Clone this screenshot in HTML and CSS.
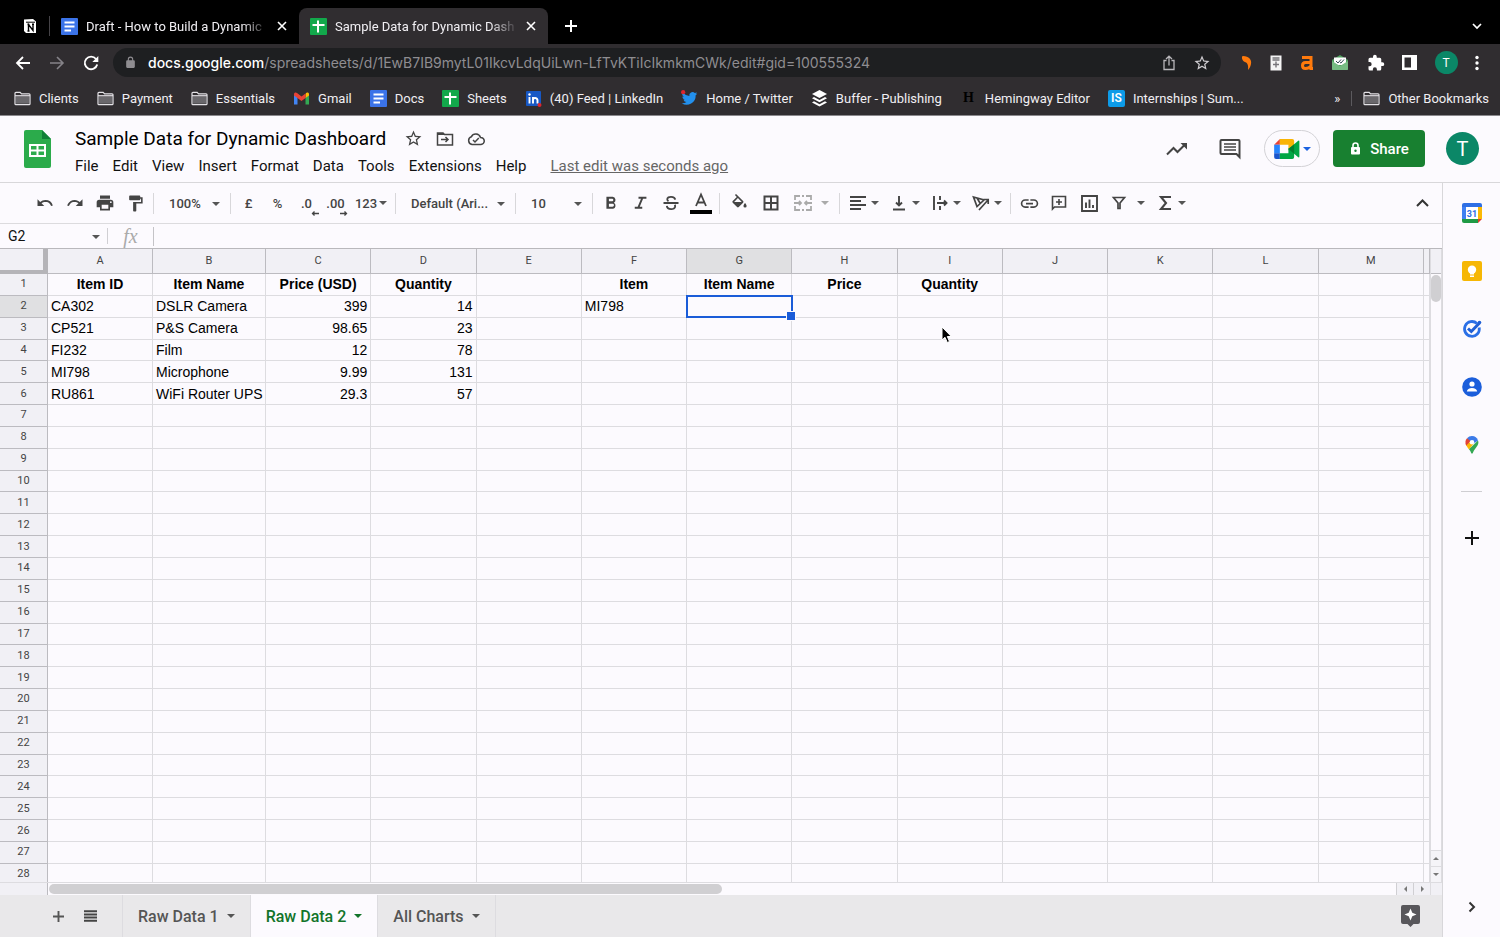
FILE: index.html
```html
<!DOCTYPE html>
<html lang="en">
<head>
    <meta charset="utf-8">
    <meta name="viewport" content="width=device-width, initial-scale=1">
    <title>Sample Data for Dynamic Dashboard</title>
    <link rel="stylesheet" href="styles.css">
</head>
<body>
    <!-- shared icons -->
    <svg class="sprite" aria-hidden="true">
        <symbol id="folder" viewBox="0 0 18 16"><path d="M1 3V13.500a1 1 0 0 0 1 1H16a1 1 0 0 0 1-1V4a1 1 0 0 0-1-1H8L6.500 1.500H2A1 1 0 0 0 1 2.500Z" fill="none" stroke="#e4e2e6" stroke-width="1.300"/><path d="M2 5.500H16V13.500H2Z" fill="#6a686c"/><path d="M1 5H17" stroke="#e4e2e6" stroke-width="1.200"/></symbol>
        <symbol id="docs" viewBox="0 0 17 17"><rect width="17" height="17" rx="1" fill="#3b73e8"/><path d="M3.500 4.500H13.500M3.500 8.500H13.500M3.500 12.500H10" stroke="#fff" stroke-width="1.800"/></symbol>
        <symbol id="sheets" viewBox="0 0 17 17"><rect width="17" height="17" rx="1" fill="#12a84b"/><path d="M2.500 7H14.500M8 2.500V14.500" stroke="#fff" stroke-width="2"/></symbol>
        <symbol id="close" viewBox="0 0 10 10"><path d="M1 1L9 9M9 1L1 9" stroke="#fff" stroke-width="1.600"/></symbol>
        <symbol id="star" viewBox="0 0 24 24"><path d="M22 9.240l-7.190-.62L12 2 9.190 8.630 2 9.240l5.460 4.730L5.820 21 12 17.270 18.180 21l-1.630-7.030L22 9.240zM12 15.400l-3.760 2.270 1-4.280-3.320-2.880 4.380-.38L12 6.100l1.710 4.040 4.380.38-3.320 2.880 1 4.280L12 15.400z"/></symbol>
        <symbol id="lock" viewBox="0 0 24 24"><path d="M18 8h-1V6A5 5 0 0 0 7 6v2H6a2 2 0 0 0-2 2v10a2 2 0 0 0 2 2h12a2 2 0 0 0 2-2V10a2 2 0 0 0-2-2zM9 6a3 3 0 0 1 6 0v2H9z"/></symbol>
    </svg>

    <header class="browser">
        <div class="tab-strip">
            <button class="pinned" aria-label="Notion">
                <svg width="14" height="16" viewBox="0 0 14 16"><path d="M1 1.500L10 1L13 3.500V15H3L1 13Z" fill="#fff"/><path d="M3 4.200H12" stroke="#000"/><path d="M5.500 13V6.500L10 12.500V6M4.500 6.500H6.500M9 6.200H11M4.500 13H6.500" fill="none" stroke="#000" stroke-width="1.400"/></svg>
            </button>
            <div class="tab">
                <svg width="17" height="17"><use href="#docs"/></svg>
                <span class="tab-title">Draft - How to Build a Dynamic</span>
                <button aria-label="Close tab"><svg width="10" height="10"><use href="#close"/></svg></button>
            </div>
            <div class="tab current">
                <svg width="17" height="17"><use href="#sheets"/></svg>
                <span class="tab-title">Sample Data for Dynamic Dash</span>
                <button aria-label="Close tab"><svg width="10" height="10"><use href="#close"/></svg></button>
            </div>
            <button class="new-tab" aria-label="New tab"><svg width="14" height="14" viewBox="0 0 14 14"><path d="M7 1V13M1 7H13" stroke="#fff" stroke-width="2"/></svg></button>
            <button class="tab-search" aria-label="Search tabs"><svg width="10" height="8" viewBox="0 0 10 8"><path d="M1 2L5 6L9 2" fill="none" stroke="#fff" stroke-width="1.700"/></svg></button>
        </div>

        <div class="nav-bar">
            <button aria-label="Back"><svg width="16" height="16" viewBox="0 0 16 16" fill="none" stroke="#fff" stroke-width="1.800"><path d="M15 8H2M8 2L2 8L8 14"/></svg></button>
            <button aria-label="Forward"><svg width="16" height="16" viewBox="0 0 16 16" fill="none" stroke="#858388" stroke-width="1.600"><path d="M1 8H14M8 2L14 8L8 14"/></svg></button>
            <button aria-label="Reload"><svg width="16" height="16" viewBox="0 0 16 16"><path d="M13 4A6.300 6.300 0 1 0 14.200 9.500" fill="none" stroke="#fff" stroke-width="1.900"/><path d="M15.300 1V7H9.300Z" fill="#fff"/></svg></button>
            <div class="omnibox">
                <svg width="13" height="13" fill="#8f8d91"><use href="#lock"/></svg>
                <p class="url"><b>docs.google.com</b>/spreadsheets/d/1EwB7IB9mytL01IkcvLdqUiLwn-LfTvKTiIcIkmkmCWk/edit#gid=100555324</p>
                <button aria-label="Share page"><svg width="14" height="16" viewBox="0 0 14 16" fill="none" stroke="#b9b7bb" stroke-width="1.300"><path d="M4.500 5.500H2V14.500H12V5.500H9.500M7 10.500V1.500M4 4L7 1.200L10 4"/></svg></button>
                <button aria-label="Bookmark"><svg width="18" height="18" fill="#d0ced2"><use href="#star"/></svg></button>
            </div>
            <div class="extensions">
                <button aria-label="Semrush"><svg width="12" height="16" viewBox="0 0 12 16"><path d="M2 1C8 1 11 5 10 9C9.500 12 8 14 7 15C7.500 11 7 8 4 7C1 6 0 1 2 1Z" fill="#ff7a0c"/></svg></button>
                <button aria-label="Notes"><svg width="12" height="16" viewBox="0 0 12 16"><path d="M.5.500H11.500V15.500H.5Z" fill="#f4f4f4"/><path d="M2.500 3H9.500M2.500 5H9.500M6 6.500V12.500M3 9.500H9" stroke="#77757a" stroke-width="1.400"/></svg></button>
                <button aria-label="Ahrefs"><svg width="14" height="16" viewBox="0 0 14 16"><path d="M2 2.500H11V13.500H13M11 7.500H5.500Q2.500 7.500 2.500 10.500T5.500 13.500Q9 13.500 11 11" fill="none" stroke="#ff7a0c" stroke-width="3"/></svg></button>
                <button aria-label="Mail tracker"><svg width="18" height="16" viewBox="0 0 18 16"><path d="M1 5L9 0L17 5V14Q17 15 16 15H2Q1 15 1 14Z" fill="#4f9f5f"/><path d="M3 2.500H15V10H3Z" fill="#fff"/><path d="M1 6L9 11L17 6V14Q17 15 16 15H2Q1 15 1 14Z" fill="#76bc83"/><path d="M5 6L7 8L10 4.500M9 7.500L10 8L13 4.500" fill="none" stroke="#354b58"/></svg></button>
                <button aria-label="Extensions"><svg width="18" height="18" viewBox="0 0 24 24" fill="#fff"><path d="M20.500 11H19V7a2 2 0 0 0-2-2h-4V3.500a2.500 2.500 0 0 0-5 0V5H4a2 2 0 0 0-2 2v3.800h1.500a2.700 2.700 0 0 1 0 5.400H2V20a2 2 0 0 0 2 2h3.800v-1.500a2.700 2.700 0 0 1 5.400 0V22H17a2 2 0 0 0 2-2v-4h1.500a2.500 2.500 0 0 0 0-5z"/></svg></button>
                <button aria-label="Side panel"><svg width="15" height="15" viewBox="0 0 15 15"><path d="M0 0H15V15H0Z" fill="#fff"/><path d="M2.500 2.500H9V12.500H2.500Z" fill="#302d30"/></svg></button>
                <button class="avatar small" aria-label="Profile">T</button>
                <button aria-label="Menu"><svg width="4" height="16" viewBox="0 0 4 16" fill="#fff"><circle cx="2" cy="2.500" r="1.700"/><circle cx="2" cy="8" r="1.700"/><circle cx="2" cy="13.500" r="1.700"/></svg></button>
            </div>
        </div>

        <nav class="bookmarks">
            <a href="#"><svg width="17" height="15"><use href="#folder"/></svg>Clients</a>
            <a href="#"><svg width="17" height="15"><use href="#folder"/></svg>Payment</a>
            <a href="#"><svg width="17" height="15"><use href="#folder"/></svg>Essentials</a>
            <a href="#"><svg width="17" height="17" viewBox="0 0 17 17"><path d="M1 4V14.500H4.500V7.500Z" fill="#4285f4"/><path d="M16 4V14.500H12.500V7.500Z" fill="#34a853"/><path d="M12.500 4.500V8L16 5.500V4C16 2.300 14 2 13 3Z" fill="#fbbc04"/><path d="M1 5.500V4C1 2.300 3 2 4 3L8.500 6.500L12.500 3.500V8L8.500 11Z" fill="#ea4335"/></svg>Gmail</a>
            <a href="#"><svg width="17" height="17"><use href="#docs"/></svg>Docs</a>
            <a href="#"><svg width="17" height="17"><use href="#sheets"/></svg>Sheets</a>
            <a href="#"><svg width="17" height="17" viewBox="0 0 17 17"><rect x="1" y="1" width="15" height="15" rx="1" fill="#1758c4"/><path d="M4.500 7V13.500M8 13.500V7M8 10Q8 8 10 8T12.500 10V13.500" fill="none" stroke="#fff" stroke-width="1.900"/><circle cx="4.500" cy="4.500" r="1.200" fill="#fff"/><circle cx="14.500" cy="15" r="2" fill="#dd252d"/></svg>(40) Feed | LinkedIn</a>
            <a href="#"><svg width="17" height="17" viewBox="0 0 24 24"><path d="M23 5a9 9 0 0 1-2.600.7 4.500 4.500 0 0 0 2-2.500 9 9 0 0 1-2.900 1.100A4.500 4.500 0 0 0 11.800 8.400 12.800 12.800 0 0 1 2.500 3.700a4.500 4.500 0 0 0 1.400 6 4.500 4.500 0 0 1-2-.6c0 2.200 1.500 4 3.600 4.500a4.500 4.500 0 0 1-2 .1 4.500 4.500 0 0 0 4.200 3.100A9 9 0 0 1 1 18.700a12.800 12.800 0 0 0 19.700-11.400A9 9 0 0 0 23 5z" fill="#2390ed"/><circle cx="3" cy="3" r="3" fill="#dd252d"/></svg>Home / Twitter</a>
            <a href="#"><svg width="17" height="17" viewBox="0 0 17 17"><path d="M8.500 0L16 4L8.500 8L1 4ZM3 7L8.500 10L14 7L16 8.200L8.500 12.200L1 8.200ZM3 11.200L8.500 14.200L14 11.200L16 12.400L8.500 16.500L1 12.400Z" fill="#fff"/></svg>Buffer - Publishing</a>
            <a href="#"><span class="hemingway">H</span>Hemingway Editor</a>
            <a href="#"><span class="is-logo">IS</span>Internships | Sum...</a>
            <button class="more">»</button>
            <a href="#" class="other"><svg width="17" height="15"><use href="#folder"/></svg>Other Bookmarks</a>
        </nav>
    </header>

    <header class="doc-header">
        <svg class="doc-logo" width="27" height="38" viewBox="0 0 27 38"><path d="M2 0H18L27 9V36Q27 38 25 38H2Q0 38 0 36V2Q0 0 2 0Z" fill="#2bab4b"/><path d="M18 0L27 9H18Z" fill="#118038"/><path d="M5 14H22V27H5ZM7 16V19.500H12.500V16ZM14.500 16V19.500H20V16ZM7 21.500V25H12.500V21.500ZM14.500 21.500V25H20V21.500Z" fill="#fff" fill-rule="evenodd"/></svg>
        <div class="doc-info">
            <div class="title-row">
                <h1>Sample Data for Dynamic Dashboard</h1>
                <button aria-label="Star"><svg width="19" height="19" fill="#444"><use href="#star"/></svg></button>
                <button aria-label="Move"><svg width="18" height="16" viewBox="0 0 18 16" fill="none" stroke="#444" stroke-width="1.500"><path d="M1.500 2H7L8.500 3.500H16.500V14H1.500ZM5 8.500H12M9.500 6L12 8.500L9.500 11"/><path d="M1.500 3H8" stroke-width="2"/></svg></button>
                <button aria-label="Saved to Drive"><svg width="18" height="14" viewBox="0 0 18 14" fill="none" stroke="#444" stroke-width="1.500"><path d="M5 12.500A4 4 0 0 1 4.300 4.800A5 5 0 0 1 13.500 5.500A3.500 3.500 0 0 1 14 12.500ZM6 8L8 10L11.800 6"/></svg></button>
            </div>
            <nav class="menus">
                <button>File</button>
                <button>Edit</button>
                <button>View</button>
                <button>Insert</button>
                <button>Format</button>
                <button>Data</button>
                <button>Tools</button>
                <button>Extensions</button>
                <button>Help</button>
                <a href="#">Last edit was seconds ago</a>
            </nav>
        </div>
        <div class="doc-actions">
            <button aria-label="Activity"><svg width="22" height="14" viewBox="0 0 22 14"><path d="M1 12.500L7.500 6L11.500 10L19 2.500" fill="none" stroke="#444" stroke-width="2"/><path d="M14.500 1H21V7.500Z" fill="#444"/></svg></button>
            <button aria-label="Comments"><svg width="22" height="22" viewBox="0 0 22 22"><path d="M2.500 2H19.500Q20.500 2 20.500 3V19L17.500 16H2.500Q1.500 16 1.500 15V3Q1.500 2 2.500 2Z" fill="none" stroke="#444" stroke-width="2"/><path d="M5 6H17M5 9H17M5 12H17" stroke="#444" stroke-width="1.600"/></svg></button>
            <button class="meet" aria-label="Meet"><svg width="26" height="20" viewBox="0 0 27 21"><path d="M0 6L6 0V6Z" fill="#ea4335"/><path d="M6 0H19Q21 0 21 2V8L15 12V6H6Z" fill="#f9b404"/><path d="M0 6H6V15H0Z" fill="#2684fc"/><path d="M0 15H6V21H2Q0 21 0 19Z" fill="#1a55cc"/><path d="M6 15H15V10L21 7V19Q21 21 19 21H6Z" fill="#00a644"/><path d="M15 10.500L25 2Q26.500 1 26.500 3V18Q26.500 20 25 19Z" fill="#00a644"/><path d="M15 10.500L21 5.500V15.500Z" fill="#00802f"/></svg><i class="arrow"></i></button>
            <button class="share"><svg width="13" height="13" viewBox="0 0 13 13"><path d="M4 5V3.500A2.500 2.500 0 0 1 9 3.500V5" fill="none" stroke="#fff" stroke-width="1.600"/><rect x="2" y="5" width="9" height="7.500" rx="1" fill="#fff"/><circle cx="6.500" cy="8.700" r="1.200" fill="#188038"/></svg>Share</button>
            <button class="avatar" aria-label="Account">T</button>
        </div>
    </header>

    <div class="workspace">
        <main class="sheet">
            <div class="toolbar">
                <button aria-label="Undo"><svg width="18" height="18" viewBox="0 0 24 24"><path d="M12.500 8c-2.650 0-5.050.99-6.900 2.600L2 7v9h9l-3.620-3.620A8 8 0 0 1 20.100 16l2.370-.78A10.500 10.500 0 0 0 12.500 8z"/></svg></button>
                <button aria-label="Redo"><svg width="18" height="18" viewBox="0 0 24 24"><path d="M18.400 10.600A10.500 10.500 0 0 0 1.540 15.220L3.900 16a8 8 0 0 1 12.730-3.620L13 16h9V7z"/></svg></button>
                <button aria-label="Print"><svg width="20" height="20" viewBox="0 0 24 24"><path d="M19 8H5a3 3 0 0 0-3 3v6h4v4h12v-4h4v-6a3 3 0 0 0-3-3zm-3 11H8v-5h8zm3-7a1 1 0 1 1 0-2 1 1 0 0 1 0 2zm-1-9H6v4h12z"/></svg></button>
                <button aria-label="Paint format"><svg width="19" height="19" viewBox="0 0 24 24"><path d="M18 4V3a1 1 0 0 0-1-1H5a1 1 0 0 0-1 1v4a1 1 0 0 0 1 1h12a1 1 0 0 0 1-1V6h1v4H9v11a1 1 0 0 0 1 1h2a1 1 0 0 0 1-1v-9h8V4z"/></svg></button>
                <hr>
                <span class="dropdown zoom"><select aria-label="Zoom"><option>100%</option></select></span>
                <hr>
                <button class="narrow">£</button>
                <button class="narrow">%</button>
                <button class="narrow decimal">.0<svg width="8" height="5" viewBox="0 0 8 5"><path d="M8 2.500H1.500M3.500.500L1.500 2.500L3.500 4.500" fill="none" stroke="#444" stroke-width="1.300"/></svg></button>
                <button class="narrow decimal">.00<svg width="8" height="5" viewBox="0 0 8 5"><path d="M0 2.500H6.500M4.500.500L6.500 2.500L4.500 4.500" fill="none" stroke="#444" stroke-width="1.300"/></svg></button>
                <button class="formats">123<i class="arrow"></i></button>
                <hr>
                <span class="dropdown font"><select aria-label="Font"><option>Default (Ari...</option></select></span>
                <hr>
                <span class="dropdown size"><select aria-label="Font size"><option>10</option></select></span>
                <hr>
                <button aria-label="Bold"><svg width="20" height="20" viewBox="0 0 24 24"><path d="M15.600 11.800A4 4 0 0 0 14 4.500H6.500V19H14.500a4 4 0 0 0 1.100-7.200zM9.500 7h3.800a1.500 1.500 0 0 1 0 3H9.500zm4.300 9.500H9.500v-3.500h4.300a1.700 1.700 0 0 1 0 3.500z"/></svg></button>
                <button aria-label="Italic"><svg width="20" height="20" viewBox="0 0 24 24"><path d="M9 4.500V7h3l-4 9.500H4.500V19h9v-2.500h-3L14.500 7H18.500V4.500z"/></svg></button>
                <button aria-label="Strikethrough"><svg width="20" height="20" viewBox="0 0 24 24" fill="none" stroke="#444" stroke-width="2.200"><path d="M3 12H21M17 8C16.500 3.500 7.500 3.500 7.500 7.500Q7.500 9 9 10M7 15.500C7.500 20.500 17 20.500 17 16Q17 15 16.500 14.200"/></svg></button>
                <button aria-label="Text color"><svg width="22" height="22" viewBox="0 0 22 22"><path d="M6 14L11 2.500L16 14M7.700 10.500H14.300" fill="none" stroke="#444" stroke-width="1.800"/><path d="M0 18H22V22H0Z" fill="#000"/></svg></button>
                <hr>
                <button class="wide" aria-label="Fill color"><svg width="19" height="19" viewBox="0 0 24 24"><path d="M16.560 8.940L7.620 0 6.210 1.410l2.380 2.380-5.150 5.150a1.500 1.500 0 0 0 0 2.120l5.500 5.500a1.500 1.500 0 0 0 2.120 0l5.500-5.500a1.500 1.500 0 0 0 0-2.120zM5.210 10L10 5.210 14.790 10zM19 11.500s-2 2.170-2 3.500a2 2 0 0 0 4 0c0-1.330-2-3.500-2-3.500z"/></svg></button>
                <button class="wide" aria-label="Borders"><svg width="16" height="16" viewBox="0 0 16 16" fill="none" stroke="#444" stroke-width="2"><path d="M1.500 1.500H14.500V14.500H1.500ZM8 1V15M1 8H15"/></svg></button>
                <button class="split merge" aria-label="Merge cells"><svg width="20" height="18" viewBox="0 0 20 18" fill="none" stroke="#aaa" stroke-width="1.800"><path d="M7 2H2V6M2 12V16H7M13 2H18V6M18 12V16H13M9 2H11M9 16H11M1 9H8M6 7L8 9L6 11M19 9H12M14 7L12 9L14 11"/></svg><i class="arrow"></i></button>
                <hr>
                <button class="split" aria-label="Horizontal align"><svg width="18" height="18" viewBox="0 0 18 18" stroke="#444" stroke-width="1.800"><path d="M1 3H17M1 7H12M1 11H17M1 15H12"/></svg><i class="arrow"></i></button>
                <button class="split" aria-label="Vertical align"><svg width="18" height="18" viewBox="0 0 18 18" fill="none" stroke="#444" stroke-width="1.900"><path d="M3 15.500H15M9 2V11M6 8.500L9 11.500L12 8.500"/></svg><i class="arrow"></i></button>
                <button class="split" aria-label="Text wrapping"><svg width="18" height="18" viewBox="0 0 18 18" fill="none" stroke="#444" stroke-width="1.900"><path d="M3 2V16M9 2V6M9 12V16M6 9H15M13 6.500L15.500 9L13 11.500"/></svg><i class="arrow"></i></button>
                <button class="split" aria-label="Text rotation"><svg width="18" height="18" viewBox="0 0 18 18" fill="none" stroke="#444" stroke-width="1.700"><path d="M1.500 3L12 6L5 12.500ZM5 4L8 9M7 16L16 6M11.500 5.500H16.200V10"/></svg><i class="arrow"></i></button>
                <hr>
                <button aria-label="Insert link"><svg width="21" height="21" viewBox="0 0 24 24"><path d="M3.900 12A3.100 3.100 0 0 1 7 8.900h4V7H7a5 5 0 0 0 0 10h4v-1.900H7A3.100 3.100 0 0 1 3.900 12zM8 13h8v-2H8zm9-6h-4v1.900h4a3.100 3.100 0 0 1 0 6.200h-4V17h4a5 5 0 0 0 0-10z"/></svg></button>
                <button aria-label="Insert comment"><svg width="16" height="16" viewBox="0 0 16 16" fill="none" stroke="#444" stroke-width="1.600"><path d="M1.500 14V1.500H14.500V12H3.500ZM8 4V10M5 7H11"/></svg></button>
                <button aria-label="Insert chart"><svg width="17" height="17" viewBox="0 0 17 17" fill="none" stroke="#444" stroke-width="1.900"><path d="M1 1H16V16H1ZM5 7.500V13M8.500 4.500V13M12 10V13"/></svg></button>
                <button class="split filter" aria-label="Filter"><svg width="18" height="18" viewBox="0 0 18 18" fill="none" stroke="#444" stroke-width="1.700"><path d="M3.500 3.500H14.500L10 9V14.500H8V9Z"/></svg><i class="arrow"></i></button>
                <button class="split" aria-label="Functions"><svg width="18" height="18" viewBox="0 0 18 18" fill="none" stroke="#444" stroke-width="2.100"><path d="M15 3H5L10 9L5 15H15"/></svg><i class="arrow"></i></button>
                <button class="collapse" aria-label="Hide the menus"><svg width="13" height="8" viewBox="0 0 13 8"><path d="M1 7L6.500 1.500L12 7" fill="none" stroke="#333" stroke-width="2"/></svg></button>
            </div>

            <div class="formula-bar">
                <span class="dropdown name-box"><input type="text" value="G2" aria-label="Name box"></span>
                <label for="formula">fx</label>
                <input type="text" id="formula">
            </div>

            <div class="grid-area">
                <div class="cells">
                    <table>
                        <colgroup id="cols"></colgroup>
                        <thead><tr id="letters"></tr></thead>
                        <tbody id="rows"></tbody>
                    </table>
                </div>
                <div class="scroll-y">
                    <div class="thumb"></div>
                    <button aria-label="Scroll up"><i class="up"></i></button>
                    <button aria-label="Scroll down"><i class="down"></i></button>
                </div>
                <div class="scroll-x">
                    <div class="track"><div class="thumb"></div></div>
                    <button aria-label="Scroll left"><i class="left"></i></button>
                    <button aria-label="Scroll right"><i class="right"></i></button>
                </div>
                <div class="corner"></div>
            </div>

            <footer class="sheet-tabs">
                <button class="add" aria-label="Add sheet"><svg width="11" height="11" viewBox="0 0 11 11"><path d="M5.500 0V11M0 5.500H11" stroke="#555" stroke-width="1.900"/></svg></button>
                <button class="all" aria-label="All sheets"><svg width="13" height="12" viewBox="0 0 13 12"><path d="M0 1.200H13M0 4.400H13M0 7.600H13M0 10.800H13" stroke="#444" stroke-width="2"/></svg></button>
                <button class="sheet-tab">Raw Data 1<i class="arrow"></i></button>
                <button class="sheet-tab active">Raw Data 2<i class="arrow"></i></button>
                <button class="sheet-tab">All Charts<i class="arrow"></i></button>
                <button class="explore" aria-label="Explore"><svg width="19" height="22" viewBox="0 0 19 22"><path d="M2 0H17Q19 0 19 2V17Q19 19 17 19H12.500L9.500 22L6.500 19H2Q0 19 0 17V2Q0 0 2 0Z" fill="#58575b"/><path d="M9.500 3.500L11.300 7.700L15.500 9.500L11.300 11.300L9.500 15.500L7.700 11.300L3.500 9.500L7.700 7.700Z" fill="#fff"/></svg></button>
            </footer>
        </main>

        <aside class="side-panel">
            <button aria-label="Calendar"><svg width="20" height="20" viewBox="0 0 20 20"><path d="M2 0H18Q20 0 20 2V5H0V2Q0 0 2 0Z" fill="#2f6fe4"/><path d="M0 4H4V16H0Z" fill="#3f80f2"/><path d="M16 4H20V16H16Z" fill="#fbb904"/><path d="M0 16H16V20H2Q0 20 0 18Z" fill="#1f9a45"/><path d="M16 16H20L16 20Z" fill="#e33b2e"/><path d="M4 4H16V16H4Z" fill="#fff"/><text x="10" y="13.500" text-anchor="middle" class="cal-day">31</text></svg></button>
            <button aria-label="Keep"><svg width="20" height="20" viewBox="0 0 20 20"><rect width="20" height="20" rx="2" fill="#f6b704"/><circle cx="10" cy="8.800" r="4.200" fill="#fff"/><path d="M8 11H12V13.500H8ZM8 14.500H12V16H8Z" fill="#fff"/></svg></button>
            <button aria-label="Tasks"><svg width="20" height="20" viewBox="0 0 20 20"><path d="M15 4.500A7.400 7.400 0 1 0 17.200 8.500" fill="none" stroke="#2a6fe6" stroke-width="2.800"/><path d="M6 9.500L9.300 12.500L17.500 4" fill="none" stroke="#1f5fd6" stroke-width="3"/><circle cx="17.500" cy="3.500" r="1.800" fill="#1f5fd6"/></svg></button>
            <button aria-label="Contacts"><svg width="20" height="20" viewBox="0 0 20 20"><circle cx="10" cy="10" r="9.800" fill="#1b5edb"/><circle cx="10" cy="7" r="2.600" fill="#fff"/><path d="M4.800 14.500Q5.500 11 10 11T15.200 14.500Z" fill="#fff"/></svg></button>
            <button aria-label="Maps"><svg width="14" height="18" viewBox="0 0 14 18"><path d="M7 0A6.500 6.500 0 0 1 13 4.500L7 9L2 2.300A6.500 6.500 0 0 1 7 0Z" fill="#3c7be8"/><path d="M2 2.300L6 5.500L1.500 10Q0 7.500.5 5Q1 3.500 2 2.300Z" fill="#e24335"/><path d="M1.300 9.500L6 5L8.500 8L4 13.500Q2.500 11.500 1.300 9.500Z" fill="#fbb904"/><path d="M13 4.500Q14 7 12.500 9.500C11 12 9 13.500 7.800 17Q7 18.500 6.200 17Q5.500 15 4 13.300Z" fill="#34a853"/><circle cx="7" cy="6.300" r="2.300" fill="#fff"/></svg></button>
            <hr>
            <button aria-label="Get add-ons"><svg width="14" height="14" viewBox="0 0 14 14"><path d="M7 0V14M0 7H14" stroke="#111" stroke-width="2"/></svg></button>
            <button class="hide-panel" aria-label="Hide side panel"><svg width="8" height="12" viewBox="0 0 8 12"><path d="M1.500 1.500L6 6L1.500 10.500" fill="none" stroke="#333" stroke-width="2"/></svg></button>
        </aside>
    </div>

    <script src="script.js"></script>
</body>
</html>
```

FILE: styles.css
```css
*{
    box-sizing: border-box;
}
body{
    margin: 0;
    height: 100vh;
    display: flex;
    flex-direction: column;
    overflow: hidden;
    background: #fcfafe;
    color: #111;
    font-family: Roboto, "Liberation Sans", sans-serif;
    font-size: 14px;
}
button, input, select{
    font: inherit;
    color: inherit;
    background: none;
    border: 0;
    padding: 0;
    margin: 0;
}
button{
    display: flex;
    align-items: center;
    justify-content: center;
    flex-shrink: 0;
}
svg{
    display: block;
    flex-shrink: 0;
}
a{
    color: inherit;
    text-decoration: none;
}
hr{
    border: 0;
    margin: 0;
}
.sprite{
    position: absolute;
    width: 0;
    height: 0;
}
.arrow, .dropdown::after{
    border: 4px solid transparent;
    border-top-color: #555;
    border-bottom: 0;
}
.avatar{
    width: 33px;
    height: 33px;
    border-radius: 50%;
    background: #0b8767;
    color: #fff;
    font-size: 20px;
}
.avatar.small{
    width: 23px;
    height: 23px;
    font-size: 12px;
}

/* browser */
.browser{
    background: #302d30;
    color: #f1eff3;
    border-bottom: 1px solid #8b898d;
}
.tab-strip{
    height: 44px;
    padding: 8px 18px 0 0;
    background: #000;
    display: flex;
}
.pinned{
    width: 50px;
    padding-left: 10px;
    position: relative;
}
.pinned::after{
    content: "";
    position: absolute;
    right: 0;
    width: 1px;
    height: 20px;
    background: #454347;
}
.tab{
    width: 249px;
    padding: 0 12px 0 11px;
    display: flex;
    align-items: center;
    gap: 8px;
    font-size: 13px;
}
.tab.current{
    background: #302d30;
    border-radius: 8px 8px 0 0;
}
.tab-title{
    flex: 1;
    white-space: nowrap;
    -webkit-mask-image: linear-gradient(to right, #000 85%, transparent);
    mask-image: linear-gradient(to right, #000 85%, transparent);
}
.new-tab{
    width: 46px;
}
.tab-search{
    margin-left: auto;
}
.nav-bar{
    height: 37px;
    padding: 0 21px 0 6px;
    display: flex;
    align-items: center;
}
.nav-bar > button{
    width: 34px;
}
.omnibox{
    flex: 1;
    height: 29px;
    margin-left: 5px;
    padding: 0 10px 0 11px;
    border-radius: 15px;
    background: #1e1f21;
    display: flex;
    align-items: center;
    min-width: 0;
}
.omnibox button{
    width: 18px;
    margin-left: 15px;
}
.url{
    flex: 1;
    margin: 0 0 0 11px;
    color: #8f8d91;
    font-family: Inter, "Liberation Sans", sans-serif;
    font-size: 14px;
    white-space: nowrap;
    overflow: hidden;
}
.url b{
    color: #fff;
    font-weight: 500;
}
.extensions{
    display: flex;
    align-items: center;
    justify-content: space-between;
    width: 238px;
    margin-left: 20px;
}
.bookmarks{
    height: 34px;
    padding: 0 11px 0 14px;
    display: flex;
    align-items: center;
    gap: 18px;
    font-size: 13px;
    white-space: nowrap;
}
.bookmarks a{
    display: flex;
    align-items: center;
    gap: 8px;
}
.hemingway{
    width: 17px;
    text-align: center;
    color: #000;
    font: bold 14px "Liberation Serif", serif;
}
.is-logo{
    width: 17px;
    line-height: 17px;
    border-radius: 2px;
    background: #0d9be8;
    color: #fff;
    text-align: center;
    font-size: 12px;
    font-weight: 600;
}
.more{
    margin-left: auto;
}
.bookmarks .other{
    margin-left: -7px;
    padding-left: 11px;
    border-left: 1px solid #5c5a5e;
}

/* document header */
.doc-header{
    height: 67px;
    padding: 0 21px 0 24px;
    border-bottom: 1px solid #d8d7da;
    display: flex;
    flex-shrink: 0;
}
.doc-logo{
    margin-top: 14px;
}
.doc-info{
    flex: 1;
    padding: 9px 0 0 24px;
}
.title-row{
    height: 27px;
    display: flex;
    align-items: center;
    gap: 13px;
}
h1{
    margin: 0 5px 0 0;
    font-size: 19px;
    font-weight: 400;
    color: #000;
}
.menus{
    height: 28px;
    display: flex;
    align-items: center;
    gap: 14px;
    font-size: 15px;
}
.menus a{
    margin-left: 10px;
    color: #666;
    text-decoration: underline;
}
.doc-actions{
    height: 65px;
    display: flex;
    align-items: center;
}
.doc-actions > button:first-child{
    margin-right: 31px;
}
.meet{
    width: 56px;
    height: 37px;
    margin-left: 23px;
    gap: 3px;
    border: 1px solid #d3d2d6;
    border-radius: 19px;
}
.meet .arrow{
    border-top-color: #1a62e0;
}
.share{
    width: 92px;
    height: 37px;
    margin: 0 21px 0 13px;
    gap: 8px;
    border-radius: 4px;
    background: #188030;
    color: #fff;
    font-size: 15px;
    font-weight: 500;
}

/* spreadsheet */
.workspace{
    flex: 1;
    min-height: 0;
    display: flex;
}
.sheet{
    flex: 1;
    min-width: 0;
    display: flex;
    flex-direction: column;
}
.toolbar{
    height: 41px;
    padding: 0 5px 0 30px;
    border-bottom: 1px solid #dcdbde;
    display: flex;
    align-items: center;
    flex-shrink: 0;
    color: #444;
    font-size: 13px;
    font-weight: 500;
}
.toolbar button{
    width: 30px;
    height: 28px;
    fill: #444;
}
.toolbar hr{
    width: 1px;
    height: 21px;
    margin: 0 3px;
    background: #d8d7da;
}
.toolbar .narrow{
    width: 29px;
}
.toolbar .wide{
    width: 32px;
}
.decimal{
    position: relative;
}
.decimal svg{
    position: absolute;
    right: 2px;
    bottom: 1px;
}
.toolbar .formats{
    width: 42px;
    gap: 2px;
}
.toolbar .split{
    width: 41px;
    padding-left: 6px;
    justify-content: flex-start;
    gap: 4px;
}
.toolbar .merge{
    width: 49px;
    gap: 8px;
}
.merge .arrow{
    border-top-color: #aaa;
}
.toolbar .filter{
    width: 46px;
    gap: 9px;
}
.toolbar .collapse{
    margin-left: auto;
}
.dropdown{
    position: relative;
}
.dropdown::after{
    content: "";
    position: absolute;
    right: 7px;
    top: 50%;
    margin-top: -1px;
    pointer-events: none;
}
.dropdown select{
    width: 100%;
    padding-left: 12px;
    appearance: none;
}
.zoom{
    width: 70px;
}
.font{
    width: 113px;
}
.size{
    width: 70px;
}
.formula-bar{
    height: 25px;
    border-bottom: 1px solid #b9b8bc;
    display: flex;
    align-items: center;
    flex-shrink: 0;
}
.name-box{
    width: 108px;
    border-right: 1px solid #d0cfd3;
}
.name-box input{
    width: 90px;
    padding-left: 8px;
}
.formula-bar label{
    width: 45px;
    text-align: center;
    color: #aaa;
    font: italic 20px/20px "Liberation Serif", serif;
}
#formula{
    flex: 1;
    height: 19px;
    padding-left: 6px;
    border-left: 1px solid #c4c3c7;
}
.grid-area{
    flex: 1;
    min-height: 0;
    display: grid;
    grid-template-columns: 1fr 12px;
    grid-template-rows: 1fr 12px;
}
.cells{
    min-height: 0;
    overflow: hidden;
    border-bottom: 1px solid #dddce0;
}
/* the last row runs a little under the scroll bar */
table{
    width: 100%;
    height: calc(100% + 4px);
    table-layout: fixed;
    border-collapse: separate;
    border-spacing: 0;
    font-family: "Liberation Sans", Arial, sans-serif;
    color: #000;
}
th, td{
    padding: 0 3px;
    line-height: 20px;
    border-right: 1px solid #dddce0;
    border-bottom: 1px solid #dddce0;
    white-space: nowrap;
    text-align: left;
}
thead th, tbody th{
    background: #f1f0f5;
    border-color: #bcbbc0;
    color: #444;
    font-family: Roboto, sans-serif;
    font-size: 11px;
    font-weight: 400;
    text-align: center;
}
thead th{
    height: 25px;
}
thead th:first-child{
    border-right: 5px solid #b5b4b8;
    border-bottom: 4px solid #b5b4b8;
}
thead th.current, tbody th.current{
    background: #e0e0e2;
}
.col-index{
    width: 48px;
}
.col-a{
    width: 105px;
}
.col-b{
    width: 113px;
}
.col-edge{
    width: 6px;
}
td.title{
    font-weight: bold;
    text-align: center;
}
td.number{
    text-align: right;
}
td.selected, td.hover{
    position: relative;
}
td.selected::before{
    content: "";
    position: absolute;
    inset: -1px -2px -1px -1px;
    border: 2px solid #1a5cd8;
}
td.selected::after{
    content: "";
    position: absolute;
    right: -5px;
    bottom: -4px;
    width: 8px;
    height: 8px;
    background: #1a5cd8;
    border: 1px solid #fcfafe;
}
.pointer{
    position: absolute;
    left: 43px;
    top: 8px;
}
.scroll-y{
    border-left: 1px solid #dddce0;
    border-bottom: 1px solid #dddce0;
    border-right: 1px solid #dddce0;
    padding-top: 26px;
    display: flex;
    flex-direction: column;
    background: linear-gradient(#f1f0f5 24px, #bcbbc0 24px, #bcbbc0 25px, #fcfafe 25px);
}
.scroll-y .thumb{
    height: 27px;
    border-radius: 5px;
    background: #d0cfd2;
    margin-bottom: auto;
}
.scroll-y button{
    height: 16px;
    background: #f5f4f8;
    border-top: 1px solid #dddce0;
}
.scroll-x{
    display: flex;
    background: #f1f0f5;
}
.track{
    flex: 1;
    margin-left: 47px;
    padding: 1px;
    border-left: 1px solid #bcbbc0;
    background: #fcfafe;
}
.scroll-x .thumb{
    width: 50%;
    height: 10px;
    border-radius: 5px;
    background: #d0cfd2;
}
.scroll-x button{
    width: 17px;
    border-left: 1px solid #d0cfd3;
}
.corner{
    background: #f1f0f5;
    border-left: 1px solid #dddce0;
}
.up, .down, .left, .right{
    border: 3px solid transparent;
}
.up{
    border-bottom-color: #777;
    border-top: 0;
}
.down{
    border-top-color: #777;
    border-bottom: 0;
}
.left{
    border-right-color: #777;
    border-left: 0;
}
.right{
    border-left-color: #777;
    border-right: 0;
}
.sheet-tabs{
    height: 42px;
    padding: 0 22px 0 42px;
    background: #e9e8ea;
    display: flex;
    flex-shrink: 0;
    font-size: 16px;
    font-weight: 500;
    color: #555;
}
.add, .all{
    width: 32px;
}
.all{
    margin-right: 16px;
}
.sheet-tab{
    padding: 0 15px;
    gap: 8px;
    border-left: 1px solid #dddce0;
}
.sheet-tab.active{
    background: #fcfafe;
    color: #12742a;
}
.sheet-tab:nth-last-child(2){
    border-right: 1px solid #dddce0;
}
.active .arrow{
    border-top-color: #12742a;
}
.explore{
    margin-left: auto;
}

/* side panel */
.side-panel{
    width: 58px;
    padding: 16px 0;
    border-left: 1px solid #d8d7da;
    display: flex;
    flex-direction: column;
    align-items: center;
}
.side-panel button{
    height: 28px;
    margin-bottom: 30px;
}
.side-panel hr{
    width: 21px;
    height: 1px;
    margin: 2px 0 32px;
    background: #cfced2;
}
.side-panel .hide-panel{
    margin: auto 0 0;
}
.cal-day{
    fill: #2f6fe4;
    font: bold 9px Roboto, sans-serif;
}
```

FILE: script.js
```js
const letters = 'ABCDEFGHIJKLM'.split('');
const rowCount = 28;

// rows 1-6, keyed by column letter
const data = [
    { A: 'Item ID', B: 'Item Name', C: 'Price (USD)', D: 'Quantity', F: 'Item', G: 'Item Name', H: 'Price', I: 'Quantity' },
    { A: 'CA302', B: 'DSLR Camera', C: 399, D: 14, F: 'MI798' },
    { A: 'CP521', B: 'P&S Camera', C: 98.65, D: 23 },
    { A: 'FI232', B: 'Film', C: 12, D: 78 },
    { A: 'MI798', B: 'Microphone', C: 9.99, D: 131 },
    { A: 'RU861', B: 'WiFi Router UPS', C: 29.3, D: 57 }
];
const selected = { col: 'G', row: 2 };

function make(tag, className, text) {
    const el = document.createElement(tag);
    if (className) el.className = className;
    if (text !== undefined) el.textContent = text;
    return el;
}

const cols = document.querySelector('#cols');
const head = document.querySelector('#letters');
const body = document.querySelector('#rows');

cols.append(make('col', 'col-index'));
head.append(make('th'));
letters.forEach(letter => {
    cols.append(make('col', 'col-' + letter.toLowerCase()));
    head.append(make('th', letter === selected.col ? 'current' : '', letter));
});
cols.append(make('col', 'col-edge'));
head.append(make('th'));

for (let n = 1; n <= rowCount; n++) {
    const tr = make('tr');
    const values = data[n - 1] || {};
    tr.append(make('th', n === selected.row ? 'current' : '', n));
    letters.forEach(letter => {
        const value = values[letter];
        const td = make('td', '', value);
        if (n === 1) td.className = 'title';
        if (typeof value === 'number') td.className = 'number';
        if (n === selected.row && letter === selected.col) td.className = 'selected';
        tr.append(td);
    });
    tr.append(make('td'));
    body.append(tr);
}

// mouse pointer over I3
const hover = body.rows[2].cells[9];
hover.className = 'hover';
hover.innerHTML = '<svg class="pointer" width="12" height="18" viewBox="0 0 12 18"><path d="M1 1V14L4 11.300L6.300 16.500L8.500 15.500L6.300 10.500H10.300Z" fill="#000" stroke="#fff"/></svg>';
```
